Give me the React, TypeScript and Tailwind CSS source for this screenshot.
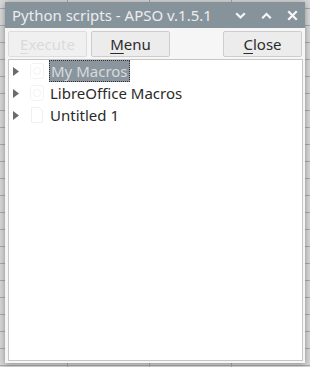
import React from "react";

function Chevron({ up }: { up?: boolean }) {
  return (
    <svg width="11" height="11" viewBox="0 0 11 11" className="block">
      <path
        d={up ? "M2 7.5 L5.5 4 L9 7.5" : "M2 4 L5.5 7.5 L9 4"}
        fill="none"
        stroke="#f4f6f7"
        strokeWidth="2.2"
        strokeLinecap="square"
      />
    </svg>
  );
}

function CloseX() {
  return (
    <svg width="11" height="11" viewBox="0 0 11 11" className="block">
      <path d="M2 2 L9 9 M9 2 L2 9" fill="none" stroke="#f4f6f7" strokeWidth="2.2" strokeLinecap="square" />
    </svg>
  );
}

function Triangle() {
  return (
    <svg width="6" height="9" viewBox="0 0 6 9" className="block">
      <path d="M0 0 L6 4.5 L0 9 Z" fill="#6b6b6b" />
    </svg>
  );
}

function FaintLib() {
  return (
    <svg width="14" height="16" viewBox="0 0 14 16" className="block">
      <rect x="0.5" y="0.5" width="13" height="15" rx="2" fill="none" stroke="#f3f3f3" />
      <circle cx="7" cy="8" r="3.5" fill="none" stroke="#f3f3f3" />
    </svg>
  );
}

function FaintDoc() {
  return (
    <svg width="12" height="16" viewBox="0 0 12 16" className="block">
      <path d="M0.5 0.5 H8 L11.5 4 V15.5 H0.5 Z" fill="none" stroke="#f0f0f0" />
    </svg>
  );
}

function Btn({ children, disabled }: { children: React.ReactNode; disabled?: boolean }) {
  return (
    <div
      className={
        "w-[79px] h-[26px] flex items-center justify-center border rounded-[2px] text-[15px] " +
        (disabled ? "text-[#dadada] bg-[#f0f0f0] border-[#dddddd]" : "text-[#2b2b2b] bg-[#ececec] border-[#cdcdcd]")
      }
    >
      {children}
    </div>
  );
}

function Row({ label, icon, selected }: { label: string; icon: React.ReactNode; selected?: boolean }) {
  return (
    <div className="h-[22px] flex items-center">
      <div className="w-[4px] shrink-0" />
      <Triangle />
      <div className="w-[11px] shrink-0" />
      <div className="w-[14px] flex justify-center">{icon}</div>
      <div className="w-[5px] shrink-0" />
      <div
        className={
          "h-[22px] flex items-center pl-[1px] pr-[1px] text-[15px] " +
          (selected
            ? "bg-[#8a959d] text-[#d6dbde] border border-dotted border-[#333]"
            : "text-[#2a2a2a]")
        }
      >
        {label}
      </div>
    </div>
  );
}

export default function App() {
  return (
    <div
      className="relative w-[310px] h-[367px] overflow-hidden bg-[#d6d6d6] bg-[linear-gradient(#a8a8a8_1px,transparent_1px),linear-gradient(90deg,#a8a8a8_1px,transparent_1px)] [background-size:82px_17px] [background-position:67px_8px]"
      style={{ fontFamily: '"Noto Sans", "Open Sans", sans-serif' }}
    >
      <div className="absolute left-[5px] top-[2px] w-[300px] h-[361px] flex flex-col bg-[#f6f6f6] shadow-[0_1px_6px_rgba(0,0,0,0.35)]">
        <div className="h-[26px] shrink-0 bg-[#87939b] flex items-center pl-[7px] pr-[7px]">
          <div className="flex-1 text-[15px] text-[#e9edf0] leading-none whitespace-nowrap">
            Python scripts - APSO v.1.5.1
          </div>
          <div className="flex items-center gap-[15px]">
            <Chevron />
            <Chevron up />
            <CloseX />
          </div>
        </div>
        <div className="flex items-center pl-[3px] pr-[3px] pt-[3px] h-[29px] shrink-0">
          <div className="flex gap-[4px]">
            <Btn disabled>
              <span>
                <span className="underline underline-offset-[3px]">E</span>xecute
              </span>
            </Btn>
            <Btn>
              <span>
                <span className="underline underline-offset-[3px]">M</span>enu
              </span>
            </Btn>
          </div>
          <div className="flex-1" />
          <Btn>
            <span>
              <span className="underline underline-offset-[3px]">C</span>lose
            </span>
          </Btn>
        </div>
        <div className="flex-1 mt-[2px] ml-[3px] mr-[2px] mb-[2px] bg-white border border-[#c6c6c6]">
          <Row label="My Macros" icon={<FaintLib />} selected />
          <Row label="LibreOffice Macros" icon={<FaintLib />} />
          <Row label="Untitled 1" icon={<FaintDoc />} />
        </div>
      </div>
    </div>
  );
}
